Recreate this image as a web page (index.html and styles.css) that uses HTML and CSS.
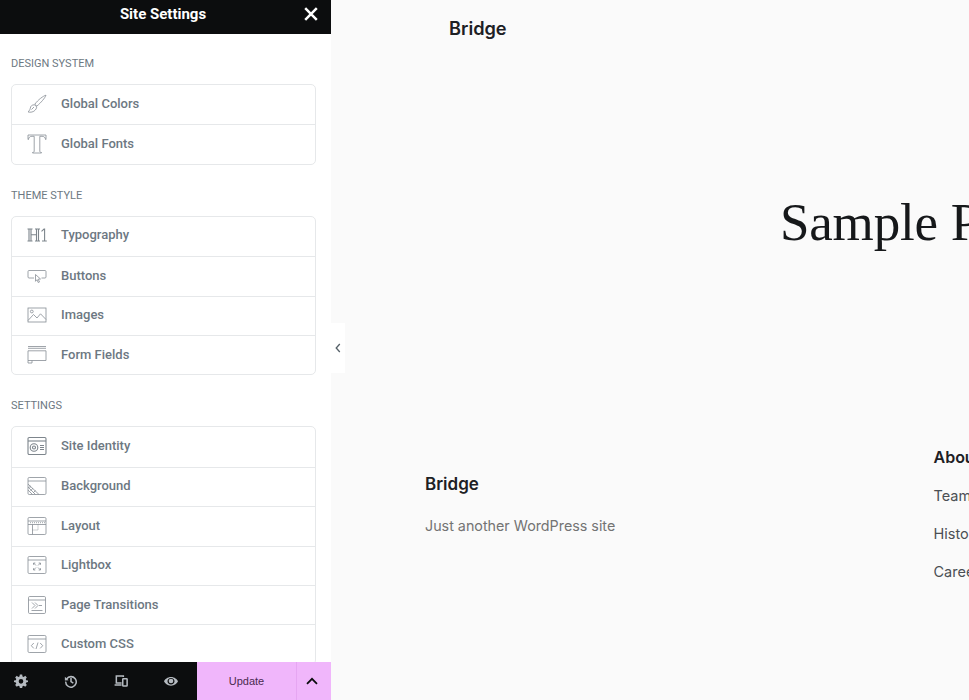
FILE: index.html
```html
<!DOCTYPE html>
<html lang="en">
<head>
<meta charset="utf-8">
<title>Site Settings</title>
<link rel="stylesheet" href="styles.css">
</head>
<body>
<div class="app">
  <aside class="panel">
    <header class="panel-head">
      <span class="panel-title">Site Settings</span>
      <svg class="close" viewBox="0 0 14 14"><path d="M1.2 1.2 12.8 12.8M12.8 1.2 1.2 12.8"/></svg>
    </header>
    <div class="panel-body">
      <h2 class="group-title">DESIGN SYSTEM</h2>
      <ul class="card">
        <li class="row"><svg class="ico" viewBox="0 0 20 20"><path d="M19 1.2C16.5 1.8 11 5.700 7.800 10.300L9.900 12.100C13.800 8.800 18 4 19 1.200ZM7.300 10.800C5 10.800 3.600 12 3.300 14.200 3.100 15.700 2.200 16.900 1 17.900 3.500 18.700 6.700 18 8.300 16 9.500 14.500 9.900 13.300 9.500 12.500Z"/><path d="M4.500 15.500 7 13"/></svg><span>Global Colors</span></li>
        <li class="row"><svg class="ico" viewBox="0 0 20 20"><path d="M1 1H19V5.500H18.600C18.200 3.200 17 2.300 15 2.300H12.800V17C12.800 18 13.300 18.400 14.500 18.500V19H5.500V18.500C6.700 18.400 7.200 18 7.200 17V2.300H5C3 2.300 1.800 3.200 1.400 5.500H1Z"/></svg><span>Global Fonts</span></li>
      </ul>

      <h2 class="group-title">THEME STYLE</h2>
      <ul class="card">
        <li class="row"><svg class="ico ico-bold" viewBox="0 0 20 20"><path d="M0.500 4H5.500M0.500 16H5.500M2 4V16M4 4V16M8 4H13M8 16H13M9.500 4V16M11.500 4V16M4 9.800H9.500M14.500 6.300 17 4H17.600V16M15 16H19.800"/></svg><span>Typography</span></li>
        <li class="row"><svg class="ico" viewBox="0 0 20 20"><path d="M7 12H2C1.400 12 1 11.600 1 11V5.500C1 4.900 1.400 4.500 2 4.500H18C18.600 4.500 19 4.900 19 5.500V11C19 11.600 18.600 12 18 12H14.500"/><path d="M8.500 8.500 13.500 13 11.200 13.200 12.500 16 11.200 16.500 10 13.700 8.500 15.300Z"/></svg><span>Buttons</span></li>
        <li class="row"><svg class="ico" viewBox="0 0 20 20"><rect x="1" y="3" width="18" height="14"/><circle cx="4.800" cy="6.500" r="1.400"/><path d="M1 15.500 6.500 9.500 10 13 13.500 8.800 19 14.500"/></svg><span>Images</span></li>
        <li class="row"><svg class="ico" viewBox="0 0 20 20"><path d="M1 1.500H19M1 3.300H19M1 5.800H19V15.500H1ZM1 15.500V18H5V15.500"/></svg><span>Form Fields</span></li>
      </ul>

      <h2 class="group-title">SETTINGS</h2>
      <ul class="card">
        <li class="row"><svg class="ico ico-bold" viewBox="0 0 20 20"><rect x="1" y="1.500" width="18" height="17" rx="1.200"/><path d="M1 5H19"/><circle cx="7" cy="11.500" r="3.800"/><circle cx="7" cy="11.500" r="1.500"/><path d="M13 9.500H17M13 11.500H17M13 13.500H17"/></svg><span>Site Identity</span></li>
        <li class="row"><svg class="ico" viewBox="0 0 20 20"><rect x="1" y="1.500" width="18" height="17" rx="1.200"/><path d="M1 5H19M1 8 12 18.500M1 11 8.500 18.500M1 14 5.500 18.500M3 9.500 3 12M6 12 3.500 15M8.500 14.500 6 17"/></svg><span>Background</span></li>
        <li class="row"><svg class="ico" viewBox="0 0 20 20"><rect x="1" y="1.500" width="18" height="17" rx="1.200"/><path d="M1 5H19M1 8.500H19M5.500 8.500V18.500"/><path class="dash" d="M3 6.700H18M5.500 14H11V8.500"/></svg><span>Layout</span></li>
        <li class="row"><svg class="ico" viewBox="0 0 20 20"><rect x="1" y="1.500" width="18" height="17" rx="1.200"/><path d="M1 5H19M6.500 8 9 10.500M13.500 8 11 10.500M6.500 15 9 12.500M13.500 15 11 12.500M6.500 8H8.300M6.500 8V9.800M13.500 8H11.700M13.500 8V9.800M6.500 15H8.300M6.500 15V13.200M13.500 15H11.700M13.500 15V13.200"/></svg><span>Lightbox</span></li>
        <li class="row"><svg class="ico" viewBox="0 0 20 20"><rect x="1.500" y="1.500" width="17" height="17" rx="1.200"/><path d="M1.500 5H18.500M5 7.500 8 10.500 5 13.500M8 7.500 11 10.500 8 13.500M12 10.500H15M4.500 15.500H15.500"/></svg><span>Page Transitions</span></li>
        <li class="row"><svg class="ico" viewBox="0 0 20 20"><rect x="1" y="1.500" width="18" height="17" rx="1.200"/><path d="M1 5H19M6.800 9 4.300 11.700 6.800 14.400M13.200 9 15.700 11.700 13.200 14.400M11 8.500 9 15"/></svg><span>Custom CSS</span></li>
      </ul>
    </div>
    <footer class="panel-foot">
      <div class="tools">
        <svg class="tool" viewBox="0 0 24 24"><path fill-rule="evenodd" d="M10 1H14L14.600 4.200 16.600 5 19.300 3.200 22 6 20.100 8.700 21 10.700 24 11.200V13.800L21 14.400 20.100 16.400 22 19 19.300 21.800 16.600 20 14.600 20.800 14 24H10L9.400 20.800 7.400 20 4.700 21.800 2 19 3.900 16.400 3 14.400 0 13.800V11.200L3 10.700 3.900 8.700 2 6 4.700 3.200 7.400 5 9.400 4.200ZM12 8.500A4 4 0 1 0 12 16.500 4 4 0 1 0 12 8.500Z"/></svg>
        <svg class="tool tool-line" viewBox="0 0 24 24"><path d="M4.500 8.500A9 9 0 1 1 3 13"/><path class="tool-fill" d="M1.500 4.500 8 10.500 1.500 11Z"/><path d="M12 7V13L16 15.500"/></svg>
        <svg class="tool tool-line" viewBox="0 0 24 24"><path d="M16 5V3.500H4V15.500H13M1 19H13"/><rect x="15" y="8" width="7.500" height="12.500" rx="1"/></svg>
        <svg class="tool" viewBox="0 0 24 24"><path fill-rule="evenodd" d="M12 5C18 5 22.500 9 24 12.500 22.500 16 18 20 12 20 6 20 1.500 16 0 12.500 1.500 9 6 5 12 5ZM12 7C8.500 7 6 9.500 6 12.500S8.500 18 12 18 18 15.500 18 12.500 15.500 7 12 7Z"/><circle cx="12" cy="12" r="4"/></svg>
      </div>
      <button class="update" type="button">Update</button>
      <button class="more" type="button" aria-label="More"><svg viewBox="0 0 12 8"><path d="M1 6.800 6 1.800 11 6.800"/></svg></button>
    </footer>
  </aside>

  <main class="page">
    <button class="collapse" type="button" aria-label="Collapse"><svg viewBox="0 0 6 10"><path d="M4.800 1 1.200 5 4.800 9"/></svg></button>
    <div class="brand">Bridge</div>
    <h1 class="hero">Sample Page</h1>
    <div class="site-foot">
      <div class="foot-about">
        <div class="foot-brand">Bridge</div>
        <p class="foot-tag">Just another WordPress site</p>
      </div>
      <nav class="foot-links">
        <div class="foot-head">About</div>
        <a class="foot-link">Team</a>
        <a class="foot-link">History</a>
        <a class="foot-link">Careers</a>
      </nav>
    </div>
  </main>
</div>
</body>
</html>
```
FILE: styles.css
```css
* { box-sizing: border-box; }
html, body { margin: 0; height: 100%; overflow: hidden; }
.app { display: flex; width: 969px; height: 700px; }

.panel { display: flex; flex-direction: column; flex: 0 0 331px; height: 700px; background: #fff; font-family: Roboto, sans-serif; }
.panel-head { position: relative; flex: 0 0 34px; display: flex; align-items: center; justify-content: center; padding-right: 5px; background: #0c0d0e; }
.panel-title { color: #fff; font-size: 15px; font-weight: 700; margin-top: -7px; }
.close { position: absolute; right: 13px; top: 7px; width: 14px; height: 14px; fill: none; stroke: #fff; stroke-width: 2.5; }

.panel-body { flex: 1; min-height: 0; overflow: hidden; padding: 0 15px 0 11px; }
.group-title { margin: 23px 0 13px; height: 14px; font-size: 11px; line-height: 14px; font-weight: 400; color: #6d7882; }
.card + .group-title { margin: 24px 0 13px; }
.card { list-style: none; margin: 0; padding: 0; border: 1px solid #e6e8ea; border-radius: 5px; }
.row { display: flex; align-items: center; height: 39.4px; padding-left: 15px; padding-bottom: 2px; border-top: 1px solid #e6e8ea; color: #6d7882; font-size: 13px; font-weight: 500; }
.row:first-child { border-top: 0; padding-bottom: 3px; }
.row span { margin-left: 14px; }
.ico { flex: 0 0 20px; width: 20px; height: 20px; margin-top: 1px; fill: none; stroke: #868d94; stroke-width: 0.8; }
.ico-bold { stroke: #7d858c; stroke-width: 1.1; }
.dash { stroke-dasharray: 1 1; }

.panel-foot { flex: 0 0 38px; display: flex; background: #0c0d0e; }
.tools { flex: 0 0 197px; display: flex; align-items: center; padding-left: 14px; gap: 36px; }
.tool { flex: 0 0 14px; width: 14px; height: 14px; fill: #b5bac0; }
.tool-line { fill: none; stroke: #b5bac0; stroke-width: 2.6; }
.tool-line .tool-fill { fill: #b5bac0; stroke: none; }
.update { flex: 0 0 99px; border: 0; padding: 0; background: #f0b6fb; color: #4a2a50; font: 400 11px "Liberation Sans", Arial, sans-serif; }
.more { flex: 0 0 35px; display: flex; align-items: center; justify-content: center; border: 0; border-left: 1px solid #e6a6f2; padding: 0 5px 0 0; background: #f0b6fb; }
.more svg { width: 12px; height: 8px; fill: none; stroke: #0c0d0e; stroke-width: 1.8; }

.page { position: relative; flex: 1; min-width: 0; overflow: hidden; background: #fafafa; font-family: Inter, sans-serif; }
.collapse { position: absolute; left: 0; top: 323px; width: 14px; height: 50px; display: flex; align-items: center; justify-content: center; padding: 0 1px 0 0; border: 0; background: #fff; }
.collapse svg { width: 6px; height: 10px; fill: none; stroke: #556068; stroke-width: 1.3; }
.brand { margin: 17px 0 0 118px; font-size: 18.200px; line-height: 23px; font-weight: 600; color: #1d2024; }
.hero { margin: 149px 0 0 449px; font: 400 53px/66px "Liberation Serif", serif; white-space: nowrap; color: #16181a; letter-spacing: -0.2px; }
.site-foot { display: flex; margin: 191px 0 0 94px; white-space: nowrap; }
.foot-about { flex: 0 0 508.500px; padding-top: 27px; }
.foot-brand { font-size: 17px; line-height: 22px; font-weight: 600; color: #1d2024; }
.foot-tag { margin: 21px 0 0; font-size: 14.300px; line-height: 20px; color: #737373; }
.foot-links { display: flex; flex-direction: column; }
.foot-head { font-size: 16px; line-height: 22px; font-weight: 600; color: #1d2024; margin-bottom: 18px; }
.foot-link { font-size: 14.500px; line-height: 20px; color: #4b4f54; margin-bottom: 18px; }
```
